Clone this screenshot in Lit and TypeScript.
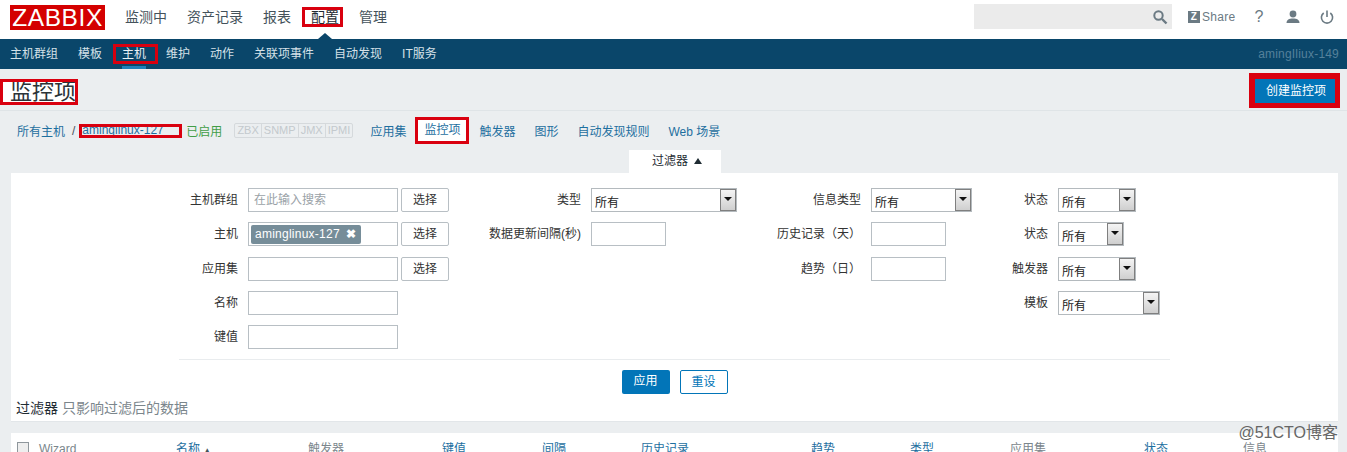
import { LitElement, html, css } from "lit";
import { customElement } from "lit/decorators.js";

const sel = (w: number) => html`<div class="sel" style="width:${w}px"><span class="sv">所有</span><span class="arr"></span></div>`;
const ipt = (w: number) => html`<div class="ipt" style="width:${w}px"></div>`;

@customElement("app-root")
export class AppRoot extends LitElement {
  static styles = css`
    :host { display: block; width: 1347px; height: 452px; overflow: hidden; position: relative; background: #ebeef0;
      font-family: "Liberation Sans", "Noto Sans CJK SC", sans-serif; font-size: 12px; color: #1f2c33; }
    .top { height: 39px; background: #fff; display: flex; align-items: center; padding: 0 3px 0 10px; box-sizing: border-box; }
    .logo { width: 95px; height: 25px; margin-top: -5px; background: #d40000; color: #fff; font-size: 24.5px; line-height: 26px; text-align: center; letter-spacing: .6px; }
    .nav { display: flex; gap: 20px; margin-left: 20px; margin-top: -6px; font-size: 14px; color: #44525b; line-height: 20px; }
    .nav .on { position: relative; color: #1f2c33; margin: 0 -4px 0 -9px; padding: 0 4px 0 9px; outline: 3px solid #d9000f; outline-offset: -3px; }
    .nav .on::after { content: ""; position: absolute; left: 16px; top: 26px; border: 7px solid transparent; border-top: 0; border-bottom: 6px solid #0a466a; }
    .right { margin-left: auto; display: flex; align-items: center; margin-top: -6px; color: #6b7a83; }
    .search { width: 198px; height: 25px; background: #ebebeb; display: flex; align-items: center; justify-content: flex-end; padding-right: 4px; box-sizing: border-box; }
    .share { display: flex; align-items: center; gap: 2px; margin-left: 16px; width: 54px; font-size: 12px; letter-spacing: .3px; }
    .zb { width: 12px; height: 12px; background: #6b7a83; color: #fff; font: bold 10px/12px "Liberation Sans", sans-serif; text-align: center; }
    .ic { width: 34px; display: flex; justify-content: center; }
    .q { font-size: 16px; }
    .sub { height: 30px; background: #0a466a; color: #d5e1e8; display: flex; align-items: center; padding: 0 8px 0 10px; box-sizing: border-box; }
    .sub .items { display: flex; gap: 20px; line-height: 20px; }
    .sub .on { position: relative; color: #e8f0f5; margin: 0 -12px 0 -9px; padding: 0 12px 0 9px; outline: 3px solid #d9000f; outline-offset: -3px; }
    .sub .on::after { content: ""; position: absolute; left: 9px; right: 12px; top: 22px; height: 3px; background: #1f7fb8; }
    .host { margin-left: auto; color: #55819b; letter-spacing: .2px; }
    .head { height: 41px; border-bottom: 1px solid #dfe4e7; display: flex; justify-content: space-between; padding-right: 7px; }
    .title { margin-top: 10px; height: 26px; width: 78px; box-sizing: border-box; background: #fff; outline: 3px solid #d9000f; outline-offset: -3px; font-size: 22px; line-height: 25px; padding-left: 10px; color: #2b3338; white-space: nowrap; }
    .create { margin-top: 4px; width: 91px; height: 35px; box-sizing: border-box; border: 6px solid #d9000f; border-width: 6px 5px 5px 6px; background: #0275b8; color: #fff; text-align: center; line-height: 24px; padding-left: 2px; }
    .crumbs { height: 39px; display: flex; align-items: center; padding-left: 17px; color: #1e6f9f; }
    .sep { margin: 0 7px; color: #44525b; }
    .mk1 { width: 103px; height: 14px; line-height: 13px; box-sizing: border-box; margin-left: -3px; padding-left: 3px; outline: 3px solid #d9000f; outline-offset: -3px; background: #ebeef0; white-space: nowrap; }
    .green { color: #429e47; margin-left: 4px; }
    .tags { display: flex; margin-left: 12px; height: 15px; border: 1px solid #d5d9dc; box-sizing: border-box; color: #c3c9cd; font-size: 11px; line-height: 13px; border-radius: 2px; width: 119px; }
    .tags span { padding: 0 2px; border-right: 1px solid #d5d9dc; flex: auto; text-align: center; }
    .tags span:last-child { border: 0; }
    .links { display: flex; gap: 19px; margin-left: 17px; align-items: center; }
    .mk2 { background: #fff; width: 36px; padding: 0 9px; height: 27px; line-height: 27px; margin: 0 -9px 0 -10px; outline: 3px solid #d9000f; outline-offset: -3px; }
    .tabrow { height: 23px; display: flex; justify-content: center; padding-left: 3px; }
    .tab { width: 92px; height: 23px; background: #fff; padding-left: 23px; box-sizing: border-box; line-height: 22px; }
    .tri { margin-left: 3px; display: inline-block; width: 0; height: 0; border: 4px solid transparent; border-top: 0; border-bottom: 6px solid #1f2c33; vertical-align: 1px; }
    .panel { margin: 0 9px 0 11px; height: 249px; background: #fff; box-sizing: border-box; display: flex; flex-direction: column; border-bottom: 1px solid #e2e6e9; }
    .grid { margin: 15px 0 0 168px; width: 991px; display: grid; grid-template-columns: 69px 230px 113px 169px 111px 119px 68px 112px; grid-auto-rows: 34.25px; }
    .lab { text-align: right; padding-right: 10px; line-height: 24px; white-space: nowrap; color: #333; }
    .cell { display: flex; gap: 3px; align-items: flex-start; }
    .ipt { height: 24px; box-sizing: border-box; border: 1px solid #b8bfc4; background: #fff; color: #9aa2a7; padding-left: 5px; line-height: 22px; flex: none; }
    .ipt.bare { padding: 0; }
    .btn { width: 48px; height: 24px; box-sizing: border-box; border: 1px solid #b8bfc4; border-radius: 2px; text-align: center; line-height: 23px; color: #333; }
    .chip { display: inline-block; background: #768d99; color: #fff; height: 19px; line-height: 18px; margin: 2px 0 0 2px; padding: 0 4px; border-radius: 2px; letter-spacing: .25px; white-space: nowrap; }
    .chip b { margin-left: 3px; }
    .sel { height: 24px; box-sizing: border-box; border: 1px solid #b4babe; display: flex; justify-content: space-between; background: #fff; }
    .sv { padding: 5px 0 0 3px; line-height: 18px; color: #222; }
    .arr { width: 16px; height: 22px; box-sizing: border-box; border: 1px solid #7f7f7f; background: linear-gradient(#f4f4f4, #cfcfcf); position: relative; }
    .arr::after { content: ""; position: absolute; left: 3px; top: 7px; border: 4px solid transparent; border-top: 4px solid #111; border-bottom: 0; }
    .rule { margin: 0 0 0 168px; width: 991px; border-top: 1px solid #e9ecee; }
    .acts { display: flex; justify-content: center; gap: 10px; margin-top: 10px; }
    .apply, .reset { width: 48px; height: 24px; box-sizing: border-box; text-align: center; line-height: 23px; border-radius: 2px; }
    .apply { background: #0275b8; color: #fff; }
    .reset { border: 1px solid #0275b8; color: #0275b8; }
    .note { margin: 5px 0 0 5px; font-size: 14px; line-height: 18px; color: #1f2c33; }
    .note span { color: #7b868c; }
    .table { margin: 11px 9px 0 11px; height: 30px; background: #fff; display: grid; grid-template-columns: 22px 137px 132px 134px 100px 99px 170px 99px 100px 134px 99px auto; padding: 8px 0 0 6px; box-sizing: border-box; color: #1e6f9f; line-height: 16px; white-space: nowrap; }
    .table .mute { color: #7b868c; }
    .cb { width: 12px; height: 12px; margin-top: 1px; box-sizing: border-box; border: 1px solid #8f979c; background: #eee; }
    .wm { position: absolute; right: 9px; top: 424px; font-size: 16px; line-height: 18px; color: #666; white-space: nowrap; }
    .arrow { font-size: 8px; color: #44525b; }
  `;

  render() {
    return html`
      <div class="top">
        <div class="logo">ZABBIX</div>
        <div class="nav"><span>监测中</span><span>资产记录</span><span>报表</span><span class="on">配置</span><span>管理</span></div>
        <div class="right">
          <div class="search">
            <svg width="16" height="16" viewBox="0 0 16 16" fill="none" stroke="#6b7a83" stroke-width="2"><circle cx="6.5" cy="6.5" r="4.2"/><path d="M10 10l4.5 4.5" stroke-width="2.4"/></svg>
          </div>
          <div class="share"><span class="zb">Z</span>Share</div>
          <div class="ic q">?</div>
          <div class="ic"><svg width="14" height="14" viewBox="0 0 14 14" fill="#6b7a83"><circle cx="7" cy="4" r="3.4"/><path d="M0.5 13c0-3.4 2.6-4.6 6.500-4.600s6.500 1.200 6.500 4.600z"/></svg></div>
          <div class="ic"><svg width="14" height="14" viewBox="0 0 14 14" fill="none" stroke="#6b7a83" stroke-width="1.600"><path d="M7 0.500v6.500"/><path d="M3.700 3a5.600 5.600 0 1 0 6.600 0"/></svg></div>
        </div>
      </div>
      <div class="sub">
        <div class="items"><span>主机群组</span><span>模板</span><span class="on">主机</span><span>维护</span><span>动作</span><span>关联项事件</span><span>自动发现</span><span>IT服务</span></div>
        <span class="host">amingIliux-149</span>
      </div>
      <div class="head"><div class="title">监控项</div><div class="create">创建监控项</div></div>
      <div class="crumbs">
        <span>所有主机</span><span class="sep">/</span><span class="mk1">aminglinux-127</span><span class="green">已启用</span>
        <div class="tags"><span>ZBX</span><span>SNMP</span><span>JMX</span><span>IPMI</span></div>
        <div class="links"><span>应用集</span><span class="mk2">监控项</span><span>触发器</span><span>图形</span><span>自动发现规则</span><span>Web 场景</span></div>
      </div>
      <div class="tabrow"><div class="tab">过滤器 <span class="tri"></span></div></div>
      <div class="panel">
        <div class="grid">
          <div class="lab">主机群组</div><div class="cell"><div class="ipt" style="width:150px">在此输入搜索</div><div class="btn">选择</div></div>
          <div class="lab">类型</div><div class="cell">${sel(146)}</div>
          <div class="lab">信息类型</div><div class="cell">${sel(101)}</div>
          <div class="lab">状态</div><div class="cell">${sel(78)}</div>

          <div class="lab">主机</div><div class="cell"><div class="ipt bare" style="width:150px"><span class="chip">aminglinux-127 <b>✖</b></span></div><div class="btn">选择</div></div>
          <div class="lab">数据更新间隔(秒)</div><div class="cell">${ipt(75)}</div>
          <div class="lab">历史记录（天）</div><div class="cell">${ipt(75)}</div>
          <div class="lab">状态</div><div class="cell">${sel(66)}</div>

          <div class="lab">应用集</div><div class="cell">${ipt(150)}<div class="btn">选择</div></div>
          <div></div><div></div>
          <div class="lab">趋势（日）</div><div class="cell">${ipt(75)}</div>
          <div class="lab">触发器</div><div class="cell">${sel(78)}</div>

          <div class="lab">名称</div><div class="cell">${ipt(150)}</div>
          <div></div><div></div><div></div><div></div>
          <div class="lab">模板</div><div class="cell">${sel(102)}</div>

          <div class="lab">键值</div><div class="cell">${ipt(150)}</div>
        </div>
        <div class="rule"></div>
        <div class="acts"><div class="apply">应用</div><div class="reset">重设</div></div>
        <div class="note">过滤器 <span>只影响过滤后的数据</span></div>
      </div>
      <div class="table">
        <div class="cb"></div><span class="mute">Wizard</span><span>名称 <span class="arrow">▲</span></span><span class="mute">触发器</span><span>键值</span><span>间隔</span><span>历史记录</span><span>趋势</span><span>类型</span><span class="mute">应用集</span><span>状态</span><span class="mute">信息</span>
      </div>
      <div class="wm">@51CTO博客</div>
    `;
  }
}
